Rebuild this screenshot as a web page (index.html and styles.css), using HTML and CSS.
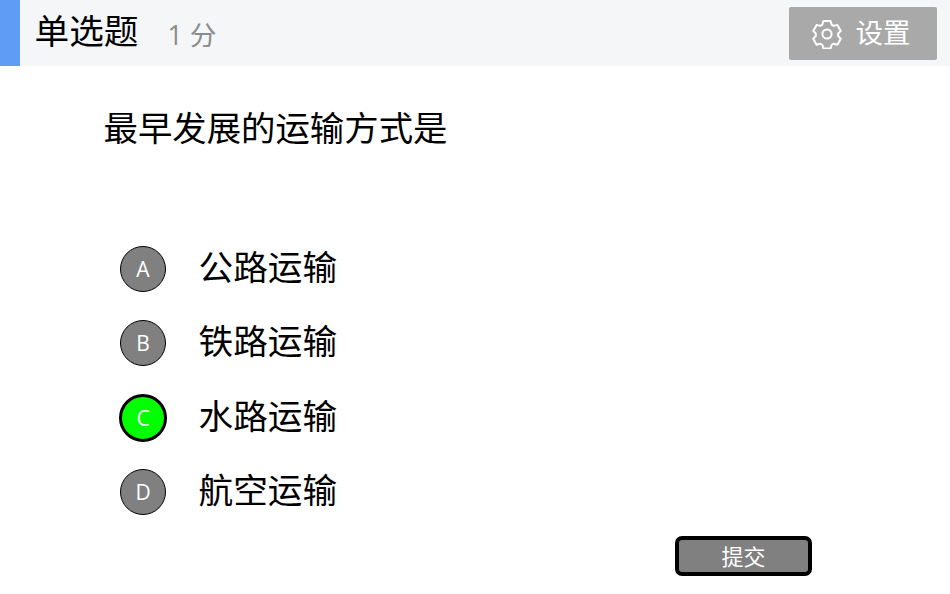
FILE: index.html
```html
<!DOCTYPE html>
<html lang="zh-CN">
<head>
<meta charset="utf-8">
<title>单选题</title>
<link rel="stylesheet" href="styles.css">
</head>
<body>
<header class="header">
  <div class="accent"></div>
  <h1 class="title">单选题</h1>
  <span class="score">1 分</span>
  <button class="settings">
    <svg class="gear" viewBox="0 0 30 30" fill="none" stroke="#fff" stroke-width="2" stroke-linejoin="round">
      <path d="M11.4 2h7.2l1 3.6 2.2 1.3 3.6-1 3.4 6-2.6 2.6v2.6l2.6 2.6-3.4 6-3.6-1-2.2 1.3-1 3.6h-7.2l-1-3.6-2.2-1.3-3.6 1-3.4-6 2.6-2.6v-2.6L1.2 11.9l3.4-6 3.6 1 2.2-1.3z"/>
      <circle cx="15" cy="15" r="4.6"/>
    </svg>
    <span class="settings-label">设置</span>
  </button>
</header>
<main class="content">
  <p class="question">最早发展的运输方式是</p>
  <ul class="options">
    <li class="option"><span class="badge">A</span><span class="option-label">公路运输</span></li>
    <li class="option"><span class="badge">B</span><span class="option-label">铁路运输</span></li>
    <li class="option"><span class="badge selected">C</span><span class="option-label">水路运输</span></li>
    <li class="option"><span class="badge">D</span><span class="option-label">航空运输</span></li>
  </ul>
  <div class="actions"><button class="submit"><span class="submit-label">提交</span></button></div>
</main>
</body>
</html>
```
FILE: styles.css
```css
* { box-sizing: border-box; }
html, body { margin: 0; padding: 0; }
body {
  width: 950px;
  height: 594px;
  overflow: hidden;
  background: #fff;
  color: #000;
  font-family: "Open Sans", "Noto Sans CJK SC", sans-serif;
}
.header {
  display: flex;
  align-items: center;
  height: 66px;
  background: #f5f6f8;
}
.accent {
  width: 20px;
  height: 66px;
  background: #5f9cf5;
}
.title {
  margin: 0 0 4px 14.5px;
  font-size: 34.67px;
  font-weight: 400;
  line-height: 1;
}
.score {
  margin: 5px 0 0 29px;
  font-size: 26.67px;
  color: #8c8c8c;
  line-height: 1;
}
.settings {
  display: flex;
  align-items: center;
  justify-content: center;
  gap: 14px;
  width: 148px;
  height: 53px;
  margin: 1px 13px 0 auto;
  padding: 0 3px 0 0;
  border: 0;
  border-radius: 2px;
  background: #a9a9a9;
  color: #fff;
  font: inherit;
  font-size: 27.5px;
}
.gear { width: 30px; height: 30px; margin-left: -1px; }
.settings-label { margin-top: -1px; line-height: 1; }
.content { display: flow-root; }
.question {
  margin: 38px 0 0 103.5px;
  font-size: 34.4px;
  line-height: 48px;
}
.options {
  list-style: none;
  margin: 94px 0 0 120px;
  padding: 0;
}
.option {
  display: flex;
  align-items: center;
  gap: 32.5px;
  height: 46px;
  margin-bottom: 28.3px;
  font-size: 34.67px;
}
.option-label { margin-top: -3px; line-height: 1; }
.badge {
  display: flex;
  align-items: center;
  justify-content: center;
  width: 46px;
  height: 46px;
  border: 1px solid #000;
  border-radius: 50%;
  background: #808080;
  color: #fff;
  font-size: 21px;
}
.badge.selected {
  width: 48px;
  height: 48px;
  margin: 0 -1px;
  border: 3px solid #000;
  background: #00ff00;
}
.actions {
  display: flex;
  margin: -7.2px 0 0 675px;
}
.submit {
  width: 137px;
  height: 40px;
  padding: 0;
  border: 4px solid #000;
  border-radius: 7px;
  background: #808080;
  color: #fff;
  font: inherit;
  font-size: 22px;
}
.submit-label { display: block; margin-top: -1px; line-height: 1; }
```
